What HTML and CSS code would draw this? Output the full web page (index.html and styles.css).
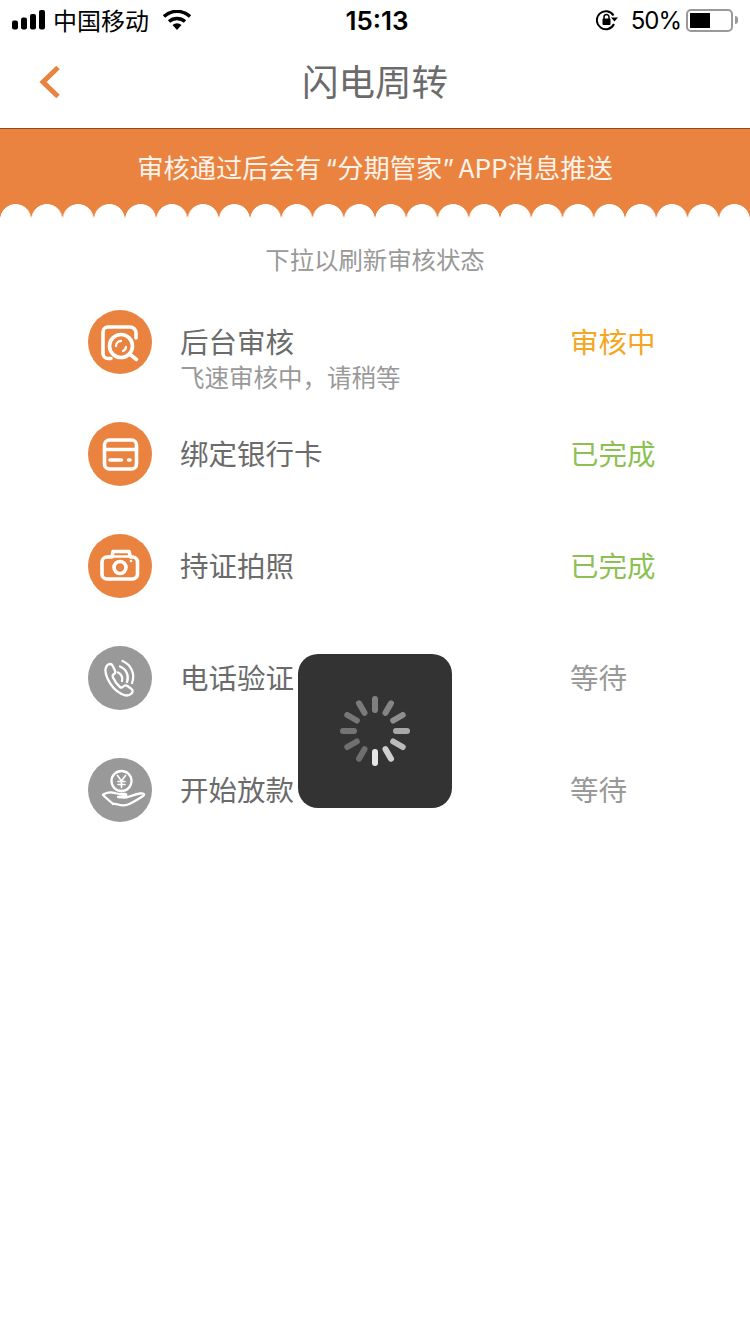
FILE: index.html
```html
<!DOCTYPE html>
<html lang="zh-CN">
<head>
    <meta charset="UTF-8">
    <meta name="viewport" content="width=device-width, initial-scale=1.0">
    <title>闪电周转</title>
    <link rel="stylesheet" href="styles.css">
</head>
<body>
    <div class="status-bar">
        <div class="status-left">
            <svg class="signal" width="33" height="20" viewBox="0 0 33 20">
                <rect x="0" y="10.500" width="6" height="9" rx="2"/>
                <rect x="9" y="7.500" width="6" height="12" rx="2"/>
                <rect x="18" y="4" width="6" height="15.500" rx="2"/>
                <rect x="27" y="0" width="6" height="19.500" rx="2"/>
            </svg>
            <span class="carrier">中国移动</span>
            <svg class="wifi" width="28" height="20" viewBox="0 0 28 20">
                <path d="M1 6.500a19 19 0 0 1 26 0" fill="none" stroke="#000" stroke-width="3.400"/>
                <path d="M6 11.500a12 12 0 0 1 16 0" fill="none" stroke="#000" stroke-width="3.400"/>
                <path d="M9.500 15a7 7 0 0 1 9 0L14 20z"/>
            </svg>
        </div>
        <div class="status-time">15:13</div>
        <div class="status-right">
            <svg class="lock" width="24" height="22" viewBox="0 0 24 22">
                <path d="M17.500 6.500A9 9 0 1 0 18 15" fill="none" stroke="#000" stroke-width="2"/>
                <path d="M15 8.500h7l-3.500 4z"/>
                <rect x="6.500" y="9.500" width="8" height="6.500" rx="1"/>
                <path d="M8 10V8a2.500 2.500 0 0 1 5 0v2" fill="none" stroke="#000" stroke-width="1.500"/>
            </svg>
            <span class="battery-text">50%</span>
            <div class="battery"><div class="battery-level"></div></div>
            <div class="battery-nub"></div>
        </div>
    </div>

    <div class="nav-bar">
        <div class="nav-back">
            <svg width="22" height="34" viewBox="0 0 22 34">
                <path d="M19 2.500 4 17l15 14.500" fill="none" stroke="#ea8340" stroke-width="5"/>
            </svg>
        </div>
        <div class="nav-title">闪电周转</div>
    </div>

    <div class="banner">
        <div class="banner-text">审核通过后会有<span class="quote quote-open">“</span>分期管家<span class="quote quote-close">”</span>APP消息推送</div>
        <div class="banner-edge"></div>
    </div>

    <div class="hint">下拉以刷新审核状态</div>

    <div class="step-list">
        <div class="step">
            <div class="step-icon active">
                <svg width="64" height="64" viewBox="0 0 64 64">
                    <path d="M23 48.500h-3a5 5 0 0 1-5-5V22a5 5 0 0 1 5-5h22a6 6 0 0 1 6 6v5" class="line"/>
                    <circle cx="33" cy="36" r="11.500" class="line"/>
                    <path d="M41.500 44 48.500 49.500" class="line"/>
                    <path d="M28 36a5 5 0 0 1 5-5M38 37a5 5 0 0 1-3 4" class="thin"/>
                </svg>
            </div>
            <div class="step-text">
                <div class="step-title">后台审核</div>
                <div class="step-sub">飞速审核中，请稍等</div>
            </div>
            <div class="step-status pending">审核中</div>
        </div>
        <div class="step">
            <div class="step-icon active">
                <svg width="64" height="64" viewBox="0 0 64 64">
                    <rect x="16.500" y="18" width="32" height="29" rx="5" class="line"/>
                    <path d="M16.500 27.500h32" class="line"/>
                    <path d="M22 38H33.500M40.500 38H42" class="line"/>
                </svg>
            </div>
            <div class="step-text">
                <div class="step-title">绑定银行卡</div>
            </div>
            <div class="step-status done">已完成</div>
        </div>
        <div class="step">
            <div class="step-icon active">
                <svg width="64" height="64" viewBox="0 0 64 64">
                    <path d="M19 23h5l1-5.500h16l1.500 5.500H45a5 5 0 0 1 4.500 5v12a5 5 0 0 1-5 5H19a5 5 0 0 1-5-5V28a5 5 0 0 1 5-5z" class="line"/>
                    <path d="M25 22.500h16" class="thin"/>
                    <circle cx="32" cy="33.500" r="6" class="line"/>
                    <circle cx="43" cy="27" r="1.300" fill="#fff"/>
                </svg>
            </div>
            <div class="step-text">
                <div class="step-title">持证拍照</div>
            </div>
            <div class="step-status done">已完成</div>
        </div>
        <div class="step">
            <div class="step-icon waiting">
                <svg width="64" height="64" viewBox="0 0 64 64">
                    <path d="M19 19.500c2-2 4.500-2 5.500 0l2.500 5c.8 1.500 0 3-1.500 4-1 .7-1 1.700-.5 3 1.800 4 4 7 7 9.500 1 .8 2 .7 3-.3 1.500-1.500 3-1.700 4.500-.7l4 3c1.500 1.200 1.500 3 0 4.500-2.500 2.500-6 2.500-10 .5-6-3-11-9-14-15.500-2.500-5.500-3-9.500-.5-13z" class="thin"/>
                    <path d="M30 26.500a7 7 0 0 1 4 8.500M32 20.500a12 12 0 0 1 7 15.500M34.500 15a17 17 0 0 1 9.500 22" class="thin"/>
                </svg>
            </div>
            <div class="step-text">
                <div class="step-title">电话验证</div>
            </div>
            <div class="step-status idle">等待</div>
        </div>
        <div class="step">
            <div class="step-icon waiting">
                <svg width="64" height="64" viewBox="0 0 64 64">
                    <circle cx="33.500" cy="23" r="10" class="thin"/>
                    <path d="M29.500 17.500 33.500 23l4-5.500M33.500 23v6.500M30 23.500h7M30 26.500h7" class="hair"/>
                    <path d="M15 36.500c3-1.500 6-2.500 9-2 3 .3 5 1.500 8 1.500h5c1.500 0 2 2 0 2.500l-7 .5 7 .5c3 0 9-3 15-4 4-.5 5.500 1 3 2.500-6 4-11 7-15 8.500-4 1.500-7 1-10 0-2-.7-3.500-1-5-.5-2-2-6-5-10-9z" class="thin"/>
                </svg>
            </div>
            <div class="step-text">
                <div class="step-title">开始放款</div>
            </div>
            <div class="step-status idle">等待</div>
        </div>
    </div>

    <div class="toast">
        <svg width="74" height="74" viewBox="-37 -37 74 74">
            <g fill="none" stroke-width="6" stroke-linecap="round">
                <path d="M0-21V-32" stroke="#808080"/>
                <path d="M0-21V-32" stroke="#858585" transform="rotate(30)"/>
                <path d="M0-21V-32" stroke="#8f8f8f" transform="rotate(60)"/>
                <path d="M0-21V-32" stroke="#a8a8a8" transform="rotate(90)"/>
                <path d="M0-21V-32" stroke="#bbb" transform="rotate(120)"/>
                <path d="M0-21V-32" stroke="#cfcfcf" transform="rotate(150)"/>
                <path d="M0-21V-32" stroke="#e6e6e6" transform="rotate(180)"/>
                <path d="M0-21V-32" stroke="#6e6e6e" transform="rotate(210)"/>
                <path d="M0-21V-32" stroke="#707070" transform="rotate(240)"/>
                <path d="M0-21V-32" stroke="#747474" transform="rotate(270)"/>
                <path d="M0-21V-32" stroke="#777" transform="rotate(300)"/>
                <path d="M0-21V-32" stroke="#7b7b7b" transform="rotate(330)"/>
            </g>
        </svg>
    </div>
</body>
</html>
```

FILE: styles.css
```css
html, body {
    margin: 0;
    padding: 0;
}
body {
    position: relative;
    width: 750px;
    height: 1334px;
    overflow: hidden;
    background-color: #fff;
    font-family: "Noto Sans CJK SC", "Liberation Sans", sans-serif;
    color: #666;
}

/* Status bar */
.status-bar {
    display: flex;
    justify-content: space-between;
    align-items: center;
    height: 40px;
    padding: 0 11px 0 12px;
    color: #000;
}
.status-left, .status-right {
    display: flex;
    align-items: center;
    width: 240px;
}
.status-right {
    justify-content: flex-end;
}
.carrier {
    margin-left: 8px;
    font-size: 24px;
    line-height: 40px;
}
.wifi {
    margin-left: 14px;
}
.status-time {
    margin-left: 3px;
    font-family: Inter, "Liberation Sans", sans-serif;
    font-size: 26px;
    font-weight: 600;
}
.lock {
    margin-right: 11px;
}
.battery-text {
    margin-right: 5px;
    font-family: Inter, "Liberation Sans", sans-serif;
    font-size: 24px;
    letter-spacing: -1px;
}
.battery {
    box-sizing: border-box;
    width: 47px;
    height: 23px;
    padding: 2px;
    border: 2px solid #999;
    border-radius: 5px;
}
.battery-level {
    width: 20px;
    height: 15px;
    background-color: #000;
}
.battery-nub {
    width: 3px;
    height: 8px;
    margin-left: 2px;
    margin-right: 1px;
    border-radius: 0 3px 3px 0;
    background-color: #999;
}

/* Navigation */
.nav-bar {
    position: relative;
    display: flex;
    justify-content: center;
    align-items: center;
    height: 88px;
    border-bottom: 1px solid #8a4a20;
}
.nav-back {
    position: absolute;
    left: 39px;
    top: 25px;
    line-height: 0;
}
.nav-title {
    margin-bottom: 7px;
    font-size: 36.5px;
    line-height: 81px;
    color: #6b6b6b;
}

/* Banner with scalloped edge */
.banner {
    display: flex;
    flex-direction: column;
    height: 89px;
    background-color: #ea8340;
}
.banner-text {
    height: 75px;
    text-align: center;
    font-size: 26.3px;
    line-height: 75px;
    color: #fdf3ea;
}
.quote {
    display: inline-block;
    width: 16px;
    font-family: Inter, "Liberation Sans", sans-serif;
}
.quote-open {
    text-align: right;
}
.quote-close {
    text-align: left;
}
.banner-edge {
    height: 14px;
    background-image: radial-gradient(circle at 50% 15.6px, #fff 15.2px, rgba(255, 255, 255, 0) 15.8px);
    background-size: 31.25px 14px;
}

.hint {
    margin-top: 21px;
    text-align: center;
    font-size: 24.4px;
    line-height: 40px;
    color: #999;
}

/* Steps */
.step-list {
    margin-top: 31px;
    padding: 0 88px;
}
.step {
    display: flex;
    height: 112px;
}
.step-icon {
    width: 64px;
    height: 64px;
    border-radius: 50%;
    line-height: 0;
}
.step-icon.active {
    background-color: #ea8340;
}
.step-icon.waiting {
    background-color: #999;
}
.line, .thin, .hair {
    fill: none;
    stroke: #fff;
    stroke-linecap: round;
    stroke-linejoin: round;
}
.line {
    stroke-width: 3.6;
}
.thin {
    stroke-width: 2.3;
}
.hair {
    stroke-width: 1.6;
}
.step-text {
    flex: 1;
    margin-left: 28px;
    padding-top: 11px;
}
.step-title {
    font-size: 28.5px;
    line-height: 40px;
    color: #6b6b6b;
}
.step-sub {
    margin-top: 4px;
    font-size: 24.5px;
    line-height: 24px;
    color: #999;
}
.step-status {
    width: 92px;
    padding-top: 11px;
    font-size: 28.5px;
    line-height: 40px;
}
.pending {
    color: #f5a623;
}
.done {
    color: #8cc152;
}
.idle {
    color: #999;
}

/* Loading overlay */
.toast {
    position: absolute;
    left: 298px;
    top: 654px;
    display: flex;
    justify-content: center;
    align-items: center;
    width: 154px;
    height: 154px;
    border-radius: 20px;
    background-color: #333;
}
```
